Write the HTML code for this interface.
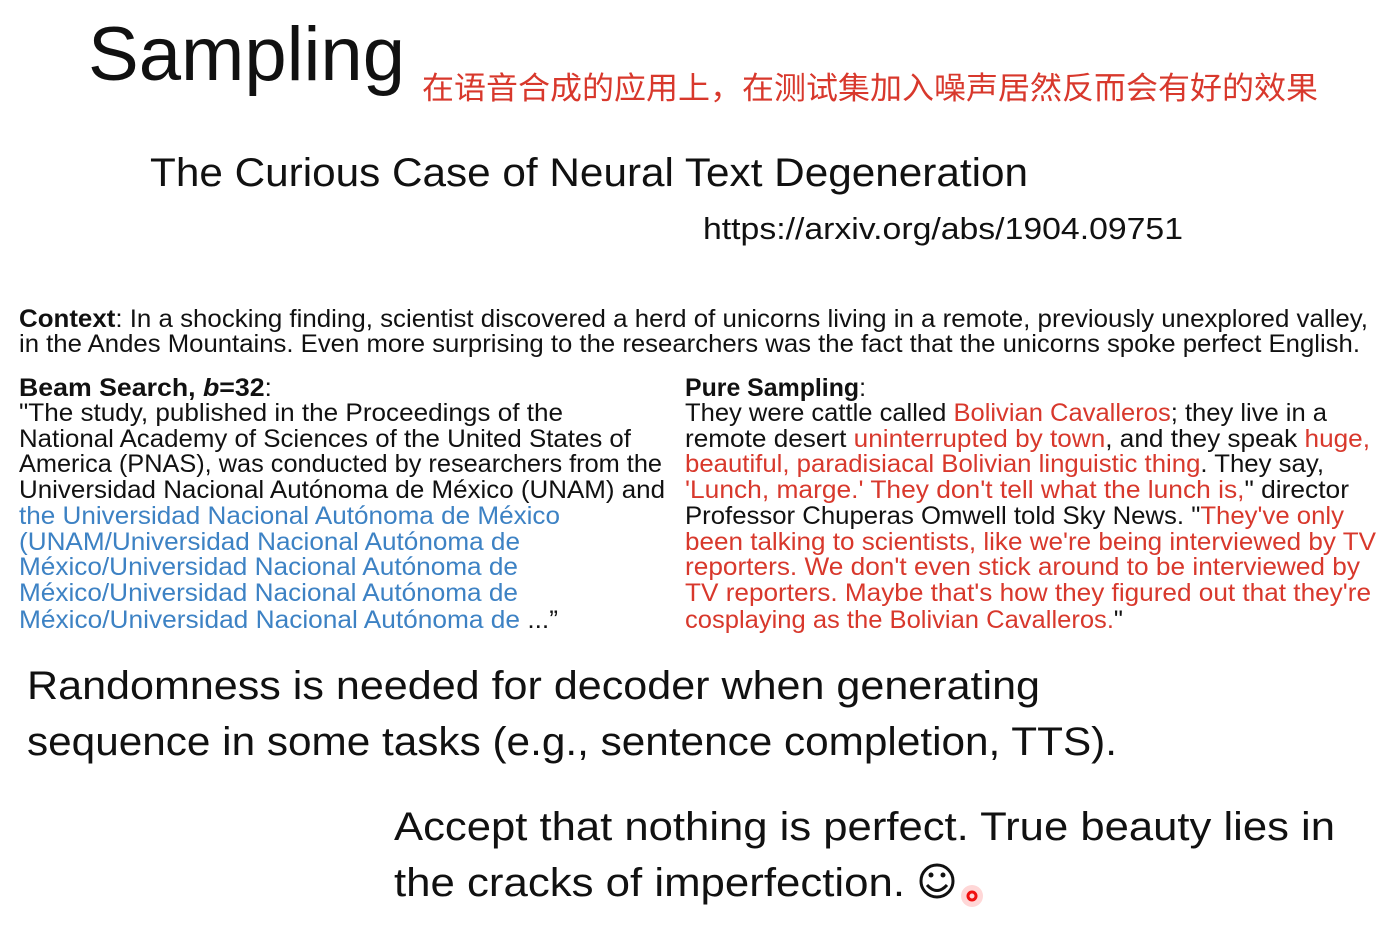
<!DOCTYPE html>
<html><head><meta charset="utf-8"><style>
html,body{margin:0;padding:0;background:#fff;width:1394px;height:948px;overflow:hidden}
svg{display:block}
text{font-family:"Liberation Sans","Noto Sans CJK SC",sans-serif;fill:#111}
.r{fill:#d8382c}.b{fill:#3d82c4}
</style></head><body>
<svg width="1394" height="948" viewBox="0 0 1394 948" xmlns="http://www.w3.org/2000/svg">
<text x="88" y="80" font-size="76" textLength="317" lengthAdjust="spacingAndGlyphs">Sampling</text>
<text x="422" y="99" font-size="31" class="r" textLength="896" lengthAdjust="spacingAndGlyphs" style="font-family:'Noto Sans CJK SC',sans-serif">在语音合成的应用上，在测试集加入噪声居然反而会有好的效果</text>
<text x="150" y="186" font-size="40" textLength="878" lengthAdjust="spacingAndGlyphs">The Curious Case of Neural Text Degeneration</text>
<text x="703" y="239" font-size="31" textLength="480" lengthAdjust="spacingAndGlyphs">https://arxiv.org/abs/1904.09751</text>

<g font-size="25">
<text x="19" y="327" textLength="1349" lengthAdjust="spacingAndGlyphs"><tspan font-weight="bold">Context</tspan>: In a shocking finding, scientist discovered a herd of unicorns living in a remote, previously unexplored valley,</text>
<text x="19" y="352" textLength="1341" lengthAdjust="spacingAndGlyphs">in the Andes Mountains. Even more surprising to the researchers was the fact that the unicorns spoke perfect English.</text>

<text x="19" y="396" textLength="253" lengthAdjust="spacingAndGlyphs"><tspan font-weight="bold">Beam Search, </tspan><tspan font-weight="bold" font-style="italic">b</tspan><tspan font-weight="bold">=32</tspan>:</text>
<text x="19" y="421" textLength="544" lengthAdjust="spacingAndGlyphs">"The study, published in the Proceedings of the</text>
<text x="19" y="447" textLength="612" lengthAdjust="spacingAndGlyphs">National Academy of Sciences of the United States of</text>
<text x="19" y="472" textLength="643" lengthAdjust="spacingAndGlyphs">America (PNAS), was conducted by researchers from the</text>
<text x="19" y="498" textLength="646" lengthAdjust="spacingAndGlyphs">Universidad Nacional Autónoma de México (UNAM) and</text>
<text x="19" y="524" class="b" textLength="541" lengthAdjust="spacingAndGlyphs">the Universidad Nacional Autónoma de México</text>
<text x="19" y="550" class="b" textLength="501" lengthAdjust="spacingAndGlyphs">(UNAM/Universidad Nacional Autónoma de</text>
<text x="19" y="575" class="b" textLength="499" lengthAdjust="spacingAndGlyphs">México/Universidad Nacional Autónoma de</text>
<text x="19" y="601" class="b" textLength="499" lengthAdjust="spacingAndGlyphs">México/Universidad Nacional Autónoma de</text>
<text x="19" y="628" textLength="539" lengthAdjust="spacingAndGlyphs"><tspan class="b">México/Universidad Nacional Autónoma de</tspan> ...”</text>

<text x="685" y="396" textLength="181" lengthAdjust="spacingAndGlyphs"><tspan font-weight="bold">Pure Sampling</tspan>:</text>
<text x="685" y="421" textLength="642" lengthAdjust="spacingAndGlyphs">They were cattle called <tspan class="r">Bolivian Cavalleros</tspan>; they live in a</text>
<text x="685" y="447" textLength="685" lengthAdjust="spacingAndGlyphs">remote desert <tspan class="r">uninterrupted by town</tspan>, and they speak <tspan class="r">huge,</tspan></text>
<text x="685" y="472" textLength="639" lengthAdjust="spacingAndGlyphs"><tspan class="r">beautiful, paradisiacal Bolivian linguistic thing</tspan>. They say,</text>
<text x="685" y="498" textLength="664" lengthAdjust="spacingAndGlyphs"><tspan class="r">'Lunch, marge.' They don't tell what the lunch is,</tspan>" director</text>
<text x="685" y="524" textLength="659" lengthAdjust="spacingAndGlyphs">Professor Chuperas Omwell told Sky News. "<tspan class="r">They've only</tspan></text>
<text x="685" y="550" class="r" textLength="691" lengthAdjust="spacingAndGlyphs">been talking to scientists, like we're being interviewed by TV</text>
<text x="685" y="575" class="r" textLength="675" lengthAdjust="spacingAndGlyphs">reporters. We don't even stick around to be interviewed by</text>
<text x="685" y="601" class="r" textLength="686" lengthAdjust="spacingAndGlyphs">TV reporters. Maybe that's how they figured out that they're</text>
<text x="685" y="628" textLength="438" lengthAdjust="spacingAndGlyphs"><tspan class="r">cosplaying as the Bolivian Cavalleros.</tspan>"</text>
</g>

<text x="27" y="699" font-size="40" textLength="1013" lengthAdjust="spacingAndGlyphs">Randomness is needed for decoder when generating</text>
<text x="27" y="755" font-size="40" textLength="1090" lengthAdjust="spacingAndGlyphs">sequence in some tasks (e.g., sentence completion, TTS).</text>
<text x="394" y="840" font-size="40" textLength="941" lengthAdjust="spacingAndGlyphs">Accept that nothing is perfect. True beauty lies in</text>
<text x="394" y="896" font-size="40" textLength="511" lengthAdjust="spacingAndGlyphs">the cracks of imperfection.</text>
<g fill="none" stroke="#111" stroke-width="3">
<circle cx="937" cy="881" r="16"/>
<path d="M927 885 Q937 896 947 885"/>
</g>
<circle cx="931" cy="875" r="2.5" fill="#111"/><circle cx="943" cy="875" r="2.5" fill="#111"/>
<circle cx="972" cy="896" r="11" fill="#ff6060" opacity="0.25"/>
<circle cx="972" cy="896" r="4" fill="none" stroke="#f01010" stroke-width="3"/>
</svg>
</body></html>
